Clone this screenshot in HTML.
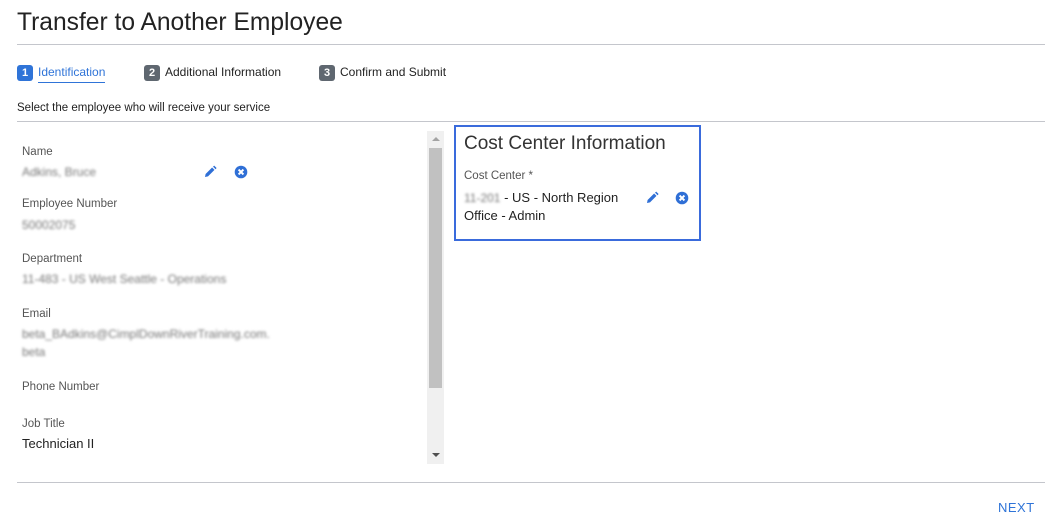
<!DOCTYPE html>
<html><head><style>
body{margin:0;width:1047px;height:520px;background:#fff;font-family:"Liberation Sans",sans-serif;color:#222;position:relative;overflow:hidden}
.a{position:absolute;white-space:nowrap}
.lbl{font-size:11.5px;color:#555}
.blur{color:#777;filter:blur(1.4px);font-size:12px}
.step{font-size:12px;color:#222}
.num{display:inline-block;width:16px;height:16px;border-radius:3px;background:#5f6770;color:#fff;font-size:11px;font-weight:bold;text-align:center;line-height:16px;margin-right:5px}
</style></head><body>
<div class="a" style="left:17px;top:9px;font-size:24.6px;color:#222">Transfer to Another Employee</div>
<div class="a" style="left:17px;top:44px;width:1028px;height:1px;background:#c4c6cc"></div>

<div class="a step" style="left:17px;top:65px"><span class="num" style="background:#2f74d8">1</span><span style="color:#2f74d8;border-bottom:1px solid #2f74d8;padding-bottom:3px">Identification</span></div>
<div class="a step" style="left:144px;top:65px"><span class="num">2</span>Additional Information</div>
<div class="a step" style="left:319px;top:65px"><span class="num">3</span>Confirm and Submit</div>

<div class="a" style="left:17px;top:102px;font-size:11.5px">Select the employee who will receive your service</div>
<div class="a" style="left:17px;top:121px;width:1028px;height:1px;background:#c4c6cc"></div>

<div class="a lbl" style="left:22px;top:146px">Name</div>
<div class="a blur" style="left:22px;top:165px">Adkins, Bruce</div>
<svg class="a" style="left:203px;top:165px" width="14" height="14" viewBox="0 0 14 14"><path d="M2 12l0.6-3 6.5-6.5 2.4 2.4-6.5 6.5z" fill="#2f6fd6"/><path d="M10 1.6l1.2-1 2.4 2.4-1 1.2z" fill="#2f6fd6"/></svg>
<svg class="a" style="left:234px;top:165px" width="14" height="14" viewBox="0 0 14 14"><circle cx="7" cy="7" r="6.3" fill="#2f6fd6"/><path d="M4.6 4.6l4.8 4.8M9.4 4.6l-4.8 4.8" stroke="#fff" stroke-width="2"/></svg>
<div class="a lbl" style="left:22px;top:198px">Employee Number</div>
<div class="a blur" style="left:22px;top:218px">50002075</div>
<div class="a lbl" style="left:22px;top:253px">Department</div>
<div class="a blur" style="left:22px;top:272px">11-483 - US West Seattle - Operations</div>
<div class="a lbl" style="left:22px;top:308px">Email</div>
<div class="a blur" style="left:22px;top:327px">beta_BAdkins@CimplDownRiverTraining.com.</div>
<div class="a blur" style="left:22px;top:345px">beta</div>
<div class="a lbl" style="left:22px;top:381px">Phone Number</div>
<div class="a lbl" style="left:22px;top:418px">Job Title</div>
<div class="a" style="left:22px;top:436px;font-size:13px">Technician II</div>

<div class="a" style="left:427px;top:131px;width:17px;height:333px;background:#f0f0f0"></div>
<div class="a" style="left:429px;top:148px;width:13px;height:240px;background:#c1c1c1"></div>
<div class="a" style="left:432px;top:137px;width:0;height:0;border-left:4px solid transparent;border-right:4px solid transparent;border-bottom:4px solid #a3a3a3"></div>
<div class="a" style="left:432px;top:453px;width:0;height:0;border-left:4px solid transparent;border-right:4px solid transparent;border-top:4px solid #505050"></div>

<div class="a" style="left:454px;top:125px;width:243px;height:112px;border:2px solid #3a6bdc"></div>
<div class="a" style="left:464px;top:133px;font-size:19px;color:#333">Cost Center Information</div>
<div class="a lbl" style="left:464px;top:170px">Cost Center *</div>
<div class="a" style="left:464px;top:190px;font-size:13px"><span class="blur">11-201</span> - US - North Region</div>
<div class="a" style="left:464px;top:208px;font-size:13px">Office - Admin</div>
<svg class="a" style="left:645px;top:191px" width="14" height="14" viewBox="0 0 14 14"><path d="M2 12l0.6-3 6.5-6.5 2.4 2.4-6.5 6.5z" fill="#2f6fd6"/><path d="M10 1.6l1.2-1 2.4 2.4-1 1.2z" fill="#2f6fd6"/></svg>
<svg class="a" style="left:675px;top:191px" width="14" height="14" viewBox="0 0 14 14"><circle cx="7" cy="7" r="6.3" fill="#2f6fd6"/><path d="M4.6 4.6l4.8 4.8M9.4 4.6l-4.8 4.8" stroke="#fff" stroke-width="2"/></svg>

<div class="a" style="left:17px;top:482px;width:1028px;height:1px;background:#c4c6cc"></div>
<div class="a" style="left:998px;top:500px;font-size:13px;color:#2f74d8;letter-spacing:0.5px">NEXT</div>
</body></html>
